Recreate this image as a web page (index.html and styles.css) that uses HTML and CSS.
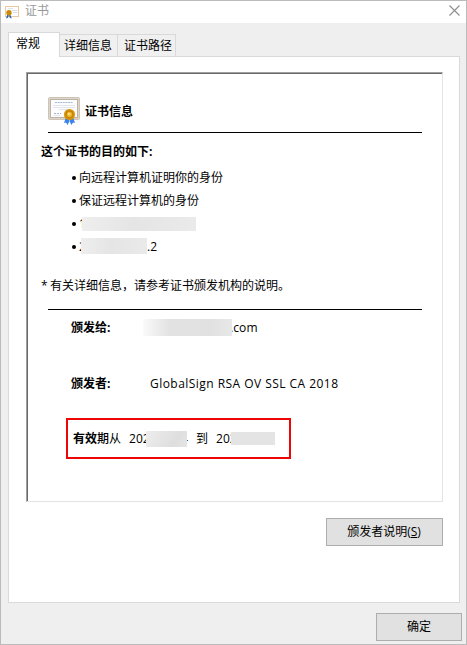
FILE: index.html
```html
<!DOCTYPE html>
<html lang="zh-CN">
<head>
<meta charset="utf-8">
<title>证书</title>
<link rel="stylesheet" href="styles.css">
</head>
<body>
<svg class="defs" width="0" height="0" aria-hidden="true">
  <symbol id="certificate" viewBox="0 0 32 29">
    <rect x=".5" y=".5" width="31" height="22" rx="1" fill="#dcd4c8" stroke="#cfc5b6"/>
    <rect x="2.500" y="2.500" width="27" height="18" fill="#fdfdfd" stroke="#bcb3a6"/>
    <path d="M7 5.500h18" stroke="#a9b8da" stroke-dasharray="2 .6"/>
    <path d="M5 8.500h22M5 10.500h22M11 12.500h9M6 18.500h6" stroke="#e0e5ef"/>
    <path d="M6 16.500h7" stroke="#a9b4d0" stroke-dasharray="2 1"/>
    <path d="M18 20l-2 6 2-.5 1.500 2.500 3-6zM25 20l2 6-2-.5-1.500 2.500-3-6z" fill="#3b82ea"/>
    <circle cx="21.500" cy="17.500" r="5.500" fill="#d69207"/>
    <circle cx="21.500" cy="17.500" r="3.300" fill="#edb62a" stroke="#b57405" stroke-width=".8"/>
    <circle cx="21" cy="17" r="1.200" fill="#ffe48b"/>
  </symbol>
</svg>
<div class="window">
  <header class="titlebar">
    <svg class="title-icon" viewBox="0 0 16 14">
      <rect x="1.500" y="1.500" width="13" height="10" fill="#fff" stroke="#ecc99e"/>
      <path d="M4 3.500h5" stroke="#dfe5f0"/>
      <path d="M8 5.500h5M9 7.500h4" stroke="#d3dced"/>
      <path d="M3.500 9L2 13.500l2-.8.800-2.200zM6 9l1.800 4.500-2-.8-.8-2.200z" fill="#2563b5"/>
      <circle cx="5" cy="7.700" r="2.700" fill="#cb8a05"/>
    </svg>
    <span class="title">证书</span>
    <svg class="close" viewBox="0 0 11 11"><path d="M.5 .5l10 10M10.500 .5l-10 10" stroke="#8c8c8c" stroke-width="1.100"/></svg>
  </header>
  <nav class="tabs">
    <div class="tab active">常规</div>
    <div class="tab details">详细信息</div>
    <div class="tab path">证书路径</div>
  </nav>
  <main class="panel">
    <section class="sheet">
      <div class="heading"><svg class="cert-icon"><use href="#certificate"/></svg><b>证书信息</b></div>
      <hr>
      <div class="purpose"><b>这个证书的目的如下:</b></div>
      <ul>
        <li>向远程计算机证明你的身份</li>
        <li>保证远程计算机的身份</li>
        <li><span class="cut cut-one">1</span><span class="mask mask-policy"></span></li>
        <li><span class="cut cut-two">2</span><span class="mask mask-oid"></span>.2</li>
      </ul>
      <div class="note"><span class="star">*</span>有关详细信息，请参考证书颁发机构的说明。</div>
      <hr>
      <div class="row issued-to"><b>颁发给:</b><span class="mask mask-domain"></span><span class="domain">.com</span></div>
      <div class="row issued-by"><b>颁发者:</b><span class="issuer">GlobalSign RSA OV SSL CA 2018</span></div>
      <div class="validity">
        <span><b>有效</b><span class="semi">期</span>从</span>
        <span class="cut from">202</span><span class="mask mask-from"></span><span class="cut tail">4</span>
        <span class="to">到</span>
        <span class="until">20</span><span class="cut dot">2</span><span class="mask mask-until"></span>
      </div>
    </section>
    <button class="statement">颁发者说明(<u>S</u>)</button>
  </main>
  <footer><button class="ok">确定</button></footer>
</div>
</body>
</html>
```
FILE: styles.css
```css
* { box-sizing: border-box; }

body {
  margin: 0;
  font: 12px/18px "Open Sans", "Noto Sans CJK SC", sans-serif;
  color: #000;
}

.defs { display: none; }

.window {
  width: 467px;
  height: 645px;
  border: 1px solid #bbb;
  background: #efefef;
  display: flex;
  flex-direction: column;
}

.titlebar {
  height: 22px;
  background: #fff;
  display: flex;
  align-items: center;
  padding: 0 6px 0 3px;
}

.title-icon { width: 16px; height: 14px; margin-top: -1px; }
.title { margin-left: 5px; margin-top: -3px; color: #999; }
.close { width: 11px; height: 11px; margin: -4px 0 0 auto; }

.tabs {
  height: 33px;
  padding-left: 7px;
  display: flex;
  align-items: flex-end;
}

.tab {
  width: 58px;
  height: 22px;
  border: 1px solid #d9d9d9;
  border-width: 1px 1px 0 0;
  background: #f0f0f0;
  line-height: 21px;
  white-space: nowrap;
}

.details { padding-left: 4px; }
.path { padding-left: 6px; }

.tab.active {
  position: relative;
  width: 52px;
  height: 25px;
  margin-bottom: -1px;
  border-left-width: 1px;
  background: #fff;
  padding-left: 7px;
}

.panel {
  width: 452px;
  height: 547px;
  margin-left: 7px;
  border: 1px solid #d9d9d9;
  background: #fff;
  display: flex;
  flex-direction: column;
  padding: 15px 16px 0 17px;
}

.sheet {
  width: 417px;
  height: 430px;
  border: 1px solid;
  border-color: #a0a0a0 #e3e3e3 #e3e3e3 #a0a0a0;
  box-shadow: inset 1px 1px #696969;
  padding: 24px 20px 0 14px;
}

.heading { height: 35px; padding-left: 7px; display: flex; }
.heading b { margin: 6px 0 0 5px; }
.cert-icon { width: 32px; height: 29px; }

hr { width: 374px; height: 1px; margin: 0 0 0 7px; border: 0; background: #000; }

.purpose { margin-top: 10px; }

ul { list-style: none; margin: 5px 0 0 31px; padding: 0; }
li { height: 23px; display: flex; align-items: center; }
li::before { content: ""; width: 4px; height: 4px; border-radius: 50%; background: #000; margin-right: 3px; }

/* Characters run on beneath the mask beside them. */
.cut { white-space: nowrap; flex: none; }
.cut-one { width: 3px; }
.cut-two { width: 2px; }

.mask { position: relative; flex: none; background: linear-gradient(90deg, #eee, #e5e5e5 45%, #eaeaea); }
.mask-policy { width: 114px; height: 14px; }
.mask-oid { width: 66px; height: 16px; margin-top: -1px; }

.note { margin-top: 17px; height: 34px; line-height: 22px; display: flex; }
.star { width: 9px; }

.row { height: 18px; margin-left: 30px; display: flex; align-items: center; }
.row b { width: 72px; }
.issued-to { margin-top: 9px; }
.issued-by { margin-top: 38px; }
.mask-domain { width: 89px; height: 17px; margin-top: -1px; background: linear-gradient(90deg, #fafafa, #e2e2e2 30%, #e1e1e1 75%, #e8e8e8); }
.domain { margin-left: -2px; letter-spacing: .1px; }
.issuer { margin-left: 7px; white-space: nowrap; letter-spacing: .46px; }

.validity {
  width: 225px;
  height: 41px;
  margin: 25px 0 0 25px;
  border: 2px solid #ee0505;
  display: flex;
  align-items: center;
  padding-left: 5px;
  white-space: nowrap;
}

.semi { font-weight: 500; }
.from { width: 17px; margin-left: 8px; }
.mask-from { z-index: 1; width: 41px; height: 16px; background: linear-gradient(120deg, #ededed, #dedede 70%, #e5e5e5); }
.tail { width: 7px; margin-left: -6px; }
.to { margin-left: 8px; }
.until { margin-left: 8px; }
.dot { width: 1px; }
.mask-until { width: 44px; height: 13px; background: #e4e4e4; }

button {
  font: inherit;
  color: inherit;
  height: 28px;
  padding: 0;
  border: 1px solid #adadad;
  background: #e1e1e1;
}

.statement { width: 117px; margin: 16px 0 0 300px; padding-right: 1px; }

footer { padding: 10px 4px 0 0; display: flex; justify-content: flex-end; }
.ok { width: 86px; }
```
